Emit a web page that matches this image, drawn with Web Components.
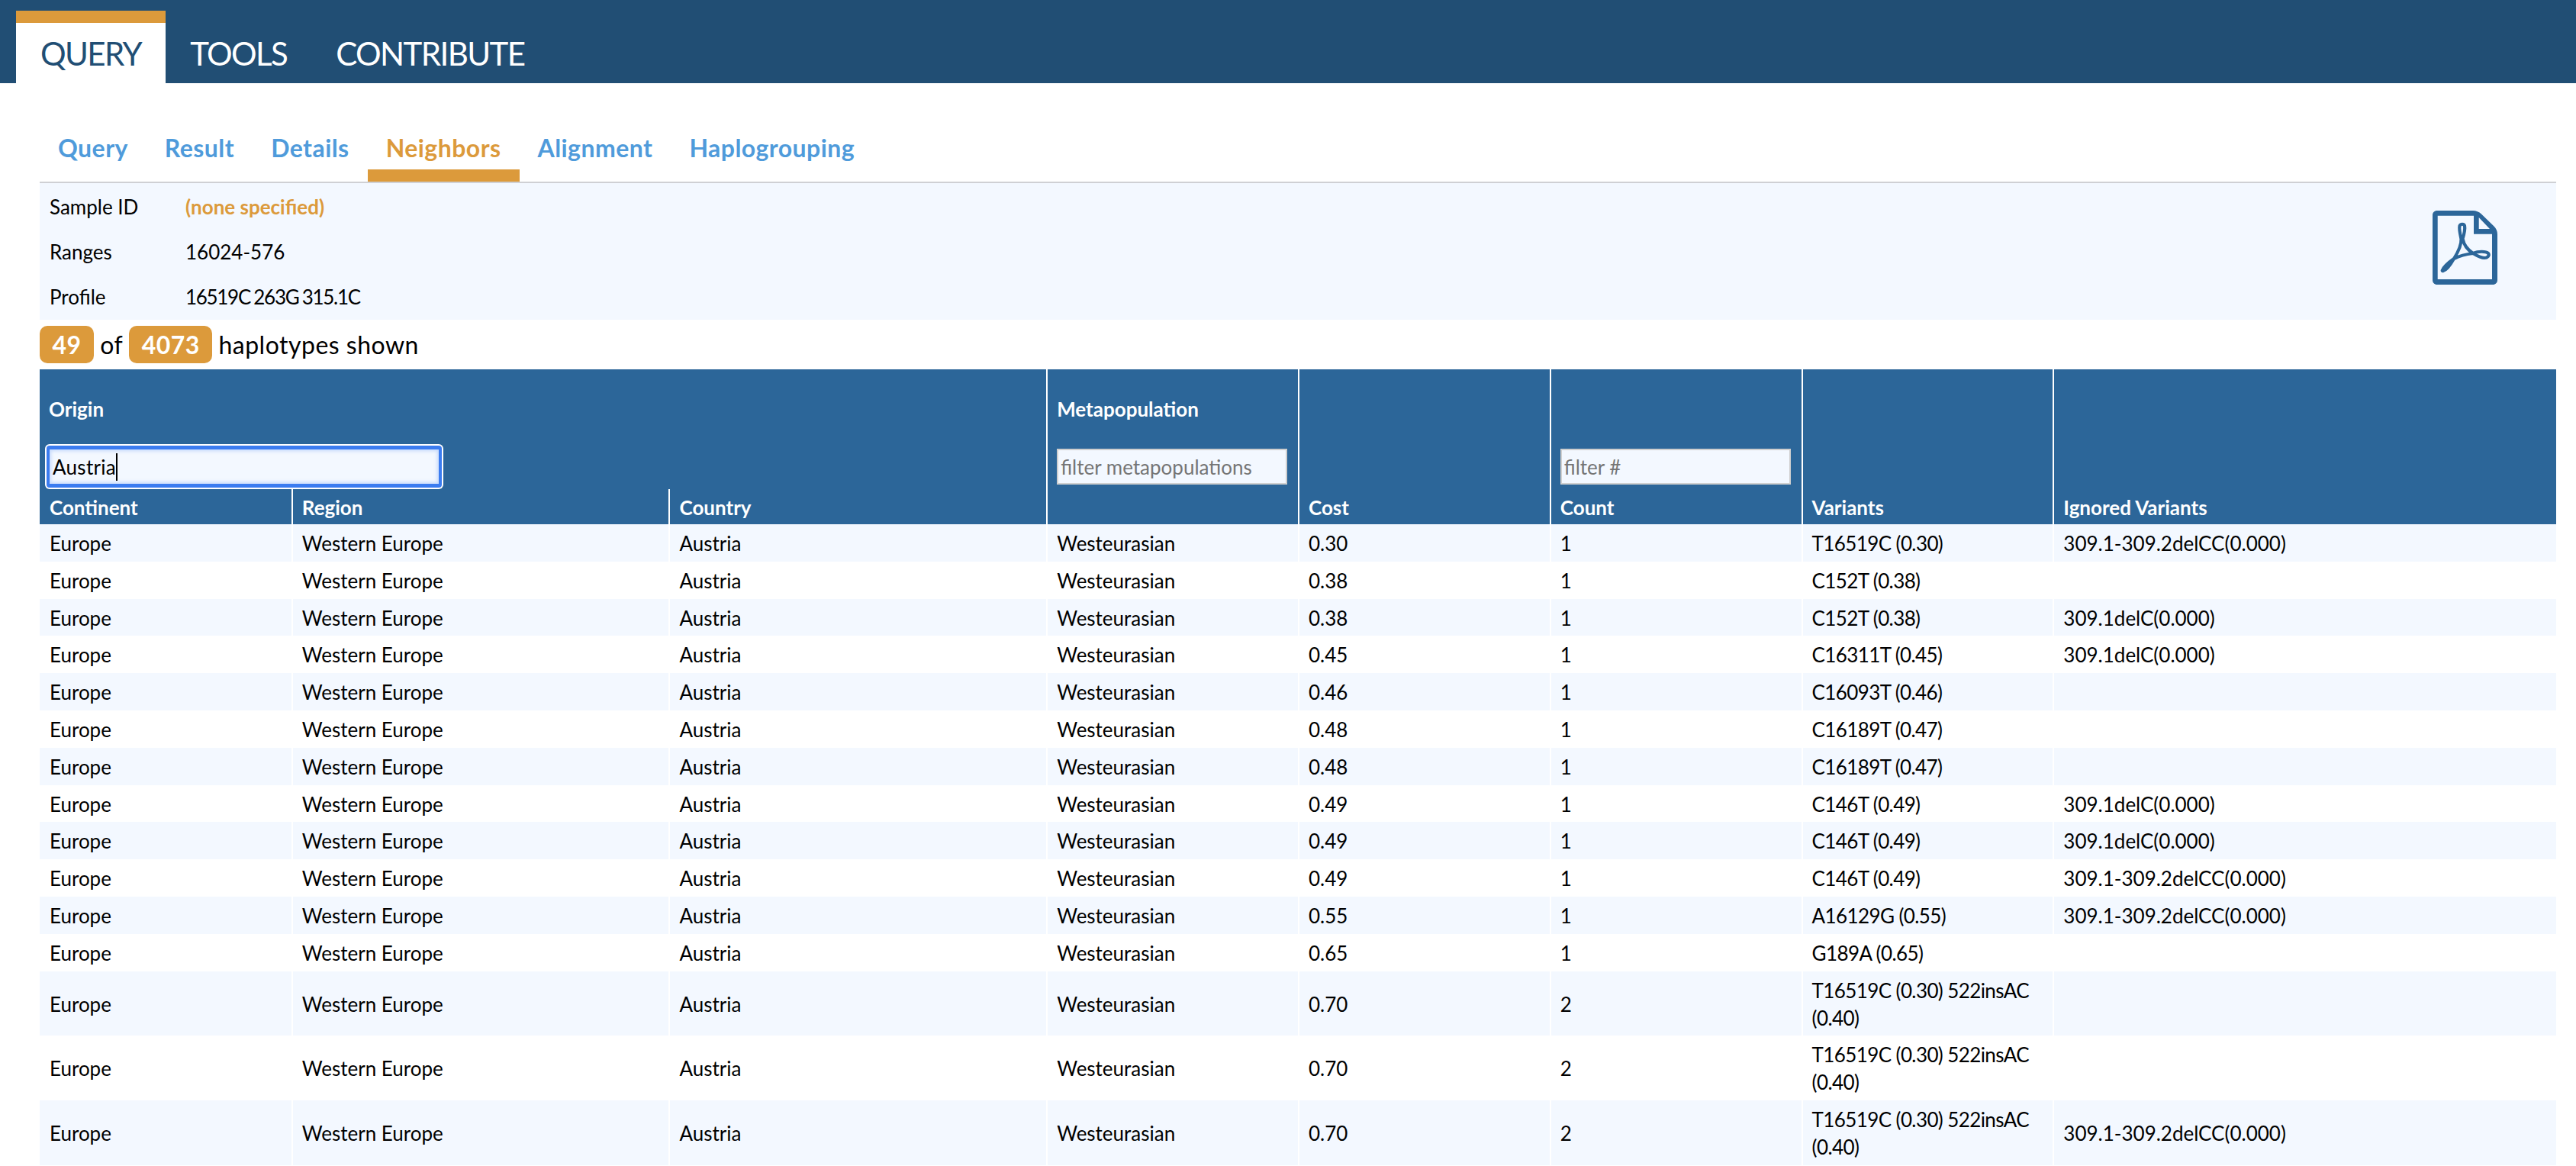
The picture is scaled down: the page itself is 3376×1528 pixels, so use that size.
<!DOCTYPE html>
<html lang="en">
<head>
<meta charset="utf-8">
<title>Neighbors</title>
<style>
  html, body { margin: 0; background: #fff; overflow: hidden; }
  body { font: 26px/36px Lato, "Open Sans", sans-serif; color: #000; }
</style>
</head>
<body>
<main-nav>
  <span>QUERY</span><span>TOOLS</span><span>CONTRIBUTE</span>
</main-nav>
<sub-tabs active="3">
  <span>Query</span><span>Result</span><span>Details</span><span>Neighbors</span><span>Alignment</span><span>Haplogrouping</span>
</sub-tabs>
<sample-info></sample-info>
<hap-count shown="49" total="4073"></hap-count>
<hap-table></hap-table>

<script>
const NAVY = '#214e74', BLUE = '#2c6699', ORANGE = '#dc9a3b', LINK = '#4f9bdb', PALE = '#f3f8ff';

class MainNav extends HTMLElement {
  constructor() {
    super();
    const shadow = this.attachShadow({ mode: 'open' });
    shadow.innerHTML = `
      <style>
        :host { display: block; background: ${NAVY}; height: 109px; box-sizing: border-box; padding: 14px 0 0 21px; }
        nav { display: flex; height: 95px; }
        ::slotted(span) {
          box-sizing: border-box;
          height: 95px;
          padding: 14px 32px 0;
          border-top: 16px solid transparent;
          color: #fff;
          font-size: 42px;
          line-height: 52px;
          letter-spacing: -1.6px;
        }
        ::slotted(span:first-child) { background: #fff; color: ${NAVY}; border-top-color: ${ORANGE}; }
      </style>
      <nav><slot></slot></nav>
    `;
  }
}

class SubTabs extends HTMLElement {
  constructor() {
    super();
    const shadow = this.attachShadow({ mode: 'open' });
    shadow.innerHTML = `
      <style>
        :host { display: block; margin: 0 26px 0 52px; height: 131px; box-sizing: border-box; padding-top: 64px; border-bottom: 2px solid #cfd0d4; }
        nav { display: flex; height: 65px; }
        ::slotted(span) {
          box-sizing: border-box;
          height: 65px;
          padding: 0 24px;
          color: ${LINK};
          font-size: 32px;
          line-height: 42px;
          font-weight: 700;
          letter-spacing: 0.45px;
        }
        ::slotted(span.on) { color: ${ORANGE}; border-bottom: 16px solid ${ORANGE}; }
      </style>
      <nav><slot></slot></nav>
    `;
    this.children[+this.getAttribute('active')].classList.add('on');
  }
}

class SampleInfo extends HTMLElement {
  constructor() {
    super();
    const shadow = this.attachShadow({ mode: 'open' });
    shadow.innerHTML = `
      <style>
        :host { display: flex; justify-content: space-between; margin: 0 26px 0 52px; height: 179px; background: ${PALE}; }
        dl { margin: 0; padding: 1px 13px 0; display: grid; grid-template-columns: 178px auto; grid-auto-rows: 59px; align-items: center; }
        dd { margin: 0; }
        .none { color: ${ORANGE}; font-weight: 700; }
        .profile { letter-spacing: -1.3px; word-spacing: -1px; }
        svg { width: 85px; height: 97px; margin: 36px 77px 0 0; fill: ${BLUE}; }
        svg .logo { fill: none; stroke: ${BLUE}; stroke-width: 4.2; stroke-linejoin: round; }
      </style>
      <dl>
        <dt>Sample ID</dt><dd class="none">(none specified)</dd>
        <dt>Ranges</dt><dd>16024-576</dd>
        <dt>Profile</dt><dd class="profile">16519C 263G 315.1C</dd>
      </dl>
      <svg viewBox="0 0 85 97">
        <path fill-rule="evenodd" d="M6 0H53C57 0 61 1.500 64 4.500L80 20C83.500 23 85 27 85 31V91C85 94.500 82.500 97 79 97H6C2.500 97 0 94.500 0 91V6C0 2.500 2.500 0 6 0ZM6.700 6.700V90H78V30.700H54V6.700ZM60.700 9V24H75Z"/>
        <path class="logo" d="M13 78C15 73 21 68 28 63C33 55 38 44 37.500 37C36 30 34.500 24 35.500 20C36.500 17 41.500 17 42 20C43 25 41 32 39.500 37C41 45 47 52 53 56C60 53 70 53 73 56C75 59 72 62 68 62C63 62 58 59 53 56C45 57 36 59 28 63C24 70 19 78 14 79C12.500 79.500 12.500 78.500 13 78Z"/>
      </svg>
    `;
  }
}

class HapCount extends HTMLElement {
  constructor() {
    super();
    const shadow = this.attachShadow({ mode: 'open' });
    shadow.innerHTML = `
      <style>
        :host { display: flex; align-items: center; gap: 8px; margin: 8px 26px 8px 52px; height: 49px; font-size: 32px; letter-spacing: 0.5px; }
        b { background: ${ORANGE}; color: #fff; border-radius: 10px; height: 49px; line-height: 49px; padding: 0 16.500px; }
      </style>
      <b>${this.getAttribute('shown')}</b><span>of</span><b>${this.getAttribute('total')}</b><span>haplotypes shown</span>
    `;
  }
}

const ONE = '309.1-309.2delCC(0.000)', DEL = '309.1delC(0.000)', INS = 'T16519C (0.30) 522insAC (0.40)';
const ROWS = [
  ['0.30', 1, 'T16519C (0.30)', ONE],
  ['0.38', 1, 'C152T (0.38)', ''],
  ['0.38', 1, 'C152T (0.38)', DEL],
  ['0.45', 1, 'C16311T (0.45)', DEL],
  ['0.46', 1, 'C16093T (0.46)', ''],
  ['0.48', 1, 'C16189T (0.47)', ''],
  ['0.48', 1, 'C16189T (0.47)', ''],
  ['0.49', 1, 'C146T (0.49)', DEL],
  ['0.49', 1, 'C146T (0.49)', DEL],
  ['0.49', 1, 'C146T (0.49)', ONE],
  ['0.55', 1, 'A16129G (0.55)', ONE],
  ['0.65', 1, 'G189A (0.65)', ''],
  ['0.70', 2, INS, ''],
  ['0.70', 2, INS, ''],
  ['0.70', 2, INS, ONE],
];

class HapTable extends HTMLElement {
  constructor() {
    super();
    const shadow = this.attachShadow({ mode: 'open' });
    const body = ROWS.map(r => `
      <tr><td>Europe</td><td>Western Europe</td><td>Austria</td><td>Westeurasian</td>
      <td>${r[0]}</td><td>${r[1]}</td><td class="var">${r[2]}</td><td>${r[3]}</td></tr>`).join('');
    shadow.innerHTML = `
      <style>
        :host { display: block; margin: 0 26px 0 52px; }
        table { width: 100%; table-layout: fixed; border-collapse: separate; border-spacing: 0; }
        th, td { box-sizing: border-box; padding: 0 13px 0 12px; border-left: 2px solid #fff; text-align: left; font-weight: 400; }
        tr > :first-child { border-left: 0; padding-left: 13px; }
        thead tr { background: ${BLUE}; }
        th { color: #fff; font-weight: 700; vertical-align: bottom; height: 46px; padding-bottom: 4px; }
        th.top { height: 157px; vertical-align: top; padding: 0 12px; }
        th.top > div.label { height: 98px; padding-top: 34px; box-sizing: border-box; }
        tbody td { padding-top: 7px; padding-bottom: 5.8px; vertical-align: middle; }
        tbody tr:nth-child(odd) { background: ${PALE}; }
        .var { letter-spacing: -0.6px; }
        input {
          display: block; box-sizing: border-box; width: 302px; height: 47px; padding: 0 3px; margin: 6px 0 0 0;
          border: 2px solid #cfcfcf; border-radius: 0; outline: 0; background: ${PALE};
          font: 26px Lato, "Open Sans", sans-serif; color: #000;
        }
        input::placeholder { color: #757575; opacity: 1; }
        .field { position: relative; width: 518px; margin: 2px 0 0 -3px; }
        .field input {
          width: 518px; height: 55px; margin: 0; padding: 0 4px;
          border: 4px solid #3b7cf0; border-top-width: 5px; border-bottom-width: 5px; border-radius: 4px;
          box-shadow: 0 0 0 2px #fff, inset 0 0 4px 2px rgba(59,124,240,.25);
          letter-spacing: 0.3px;
        }
        .caret { position: absolute; left: 91px; top: 10px; width: 2px; height: 36px; background: #000; }
      </style>
      <table>
        <colgroup>
          <col style="width:10%"><col style="width:15%"><col style="width:15%"><col style="width:10%">
          <col style="width:10%"><col style="width:10%"><col style="width:10%"><col style="width:20%">
        </colgroup>
        <thead>
          <tr>
            <th class="top" colspan="3"><div class="label">Origin</div><div class="field"><input value="Austria"><span class="caret"></span></div></th>
            <th class="top"><div class="label">Metapopulation</div><input placeholder="filter metapopulations"></th>
            <th rowspan="2">Cost</th>
            <th class="top"><div class="label"></div><input placeholder="filter #"></th>
            <th rowspan="2">Variants</th>
            <th rowspan="2">Ignored Variants</th>
          </tr>
          <tr>
            <th>Continent</th><th>Region</th><th>Country</th>
            <th></th>
            <th>Count</th>
          </tr>
        </thead>
        <tbody>${body}</tbody>
      </table>
    `;
  }
}

customElements.define('main-nav', MainNav);
customElements.define('sub-tabs', SubTabs);
customElements.define('sample-info', SampleInfo);
customElements.define('hap-count', HapCount);
customElements.define('hap-table', HapTable);
</script>
</body>
</html>
